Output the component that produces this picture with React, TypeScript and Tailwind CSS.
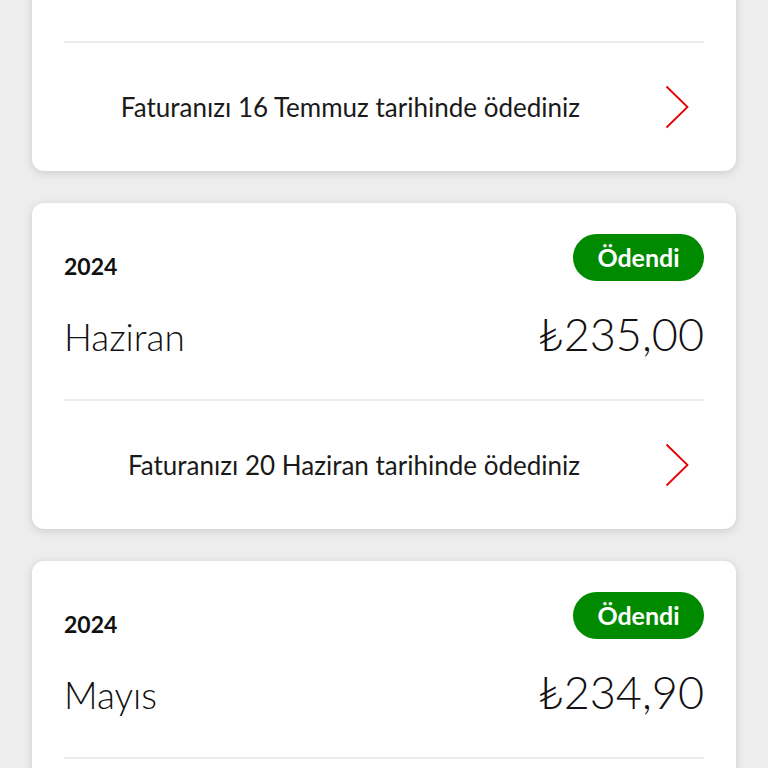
type Bill = {
  year: string;
  month: string;
  amount: string;
  paidOn: string;
};

const bills: Bill[] = [
  { year: "2024", month: "Temmuz", amount: "₺235,00", paidOn: "16 Temmuz" },
  { year: "2024", month: "Haziran", amount: "₺235,00", paidOn: "20 Haziran" },
  { year: "2024", month: "Mayıs", amount: "₺234,90", paidOn: "20 Mayıs" },
];

function Chevron() {
  return (
    <svg width="24" height="44" viewBox="0 0 24 44" fill="none" aria-hidden="true">
      <path d="M1.5 1.5 L22.5 22 L1.5 42.5" stroke="#e60000" strokeWidth="1.8" />
    </svg>
  );
}

function BillCard({ bill }: { bill: Bill }) {
  return (
    <div className="rounded-xl bg-white px-8 shadow-[0_2px_8px_rgba(0,0,0,0.14)]">
      <div className="flex items-end justify-between pt-[31px]">
        <span className="mb-[3px] text-[23px] leading-none font-bold text-[#111]">{bill.year}</span>
        <span className="flex h-[47px] w-[131px] items-center justify-center rounded-full bg-[#008a00] text-[25px] font-bold text-white">
          Ödendi
        </span>
      </div>
      <div className="mt-[27px] flex items-baseline justify-between">
        <span className="text-[37px] leading-[52px] font-light text-[#111]">{bill.month}</span>
        <span className="text-[45px] leading-[52px] font-light text-[#111]">{bill.amount}</span>
      </div>
      <div className="mt-[36px] h-[2px] bg-[#ececec]" />
      <div className="flex h-[128px] items-center justify-end">
        <span className="text-[26px] text-[#1a1a1a]">Faturanızı {bill.paidOn} tarihinde ödediniz</span>
        <span className="mr-[15px] ml-[85px] flex">
          <Chevron />
        </span>
      </div>
    </div>
  );
}

export default function App() {
  return (
    <div className="h-screen overflow-hidden bg-[#ededed] font-['Lato','Noto_Sans',sans-serif]">
      <div className="-mt-[155px] flex flex-col gap-8 px-8">
        {bills.map((bill) => (
          <BillCard key={bill.month} bill={bill} />
        ))}
      </div>
    </div>
  );
}
